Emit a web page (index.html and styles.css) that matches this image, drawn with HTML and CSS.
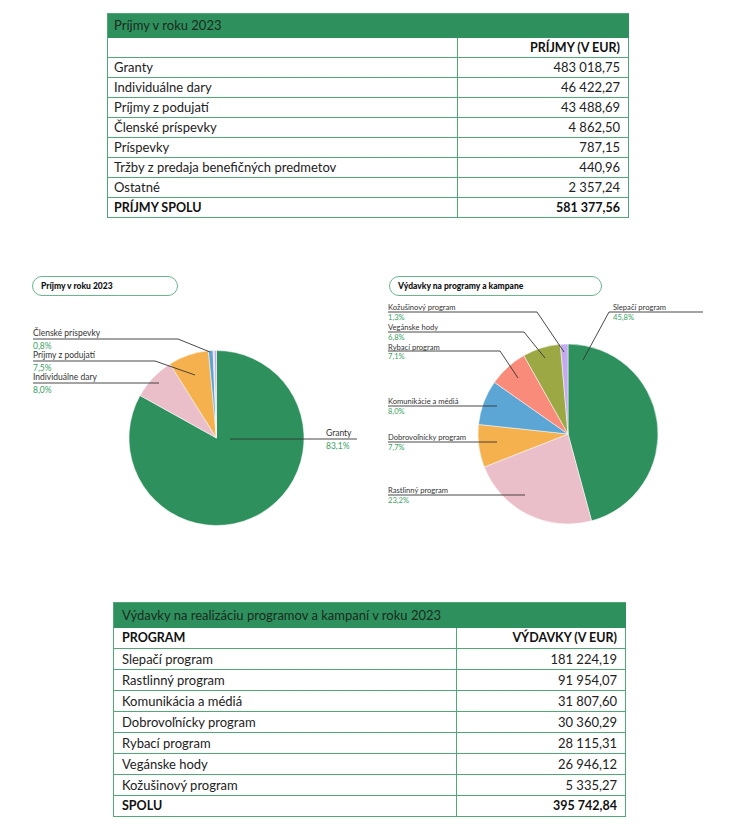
FILE: index.html
```html
<!DOCTYPE html>
<html lang="sk">
<head>
<meta charset="utf-8">
<title>Príjmy a výdavky 2023</title>
<link rel="stylesheet" href="styles.css">
</head>
<body>
<div class="page">
  <table class="fin fin-income">
    <colgroup><col class="c1"><col class="c2"></colgroup>
    <thead>
      <tr><th class="title" colspan="2">Príjmy v roku 2023</th></tr>
      <tr><th class="hd"></th><th class="hd num">PRÍJMY (V EUR)</th></tr>
    </thead>
    <tbody>
      <tr><td>Granty</td><td class="num">483 018,75</td></tr>
      <tr><td>Individuálne dary</td><td class="num">46 422,27</td></tr>
      <tr><td>Príjmy z podujatí</td><td class="num">43 488,69</td></tr>
      <tr><td>Členské príspevky</td><td class="num">4 862,50</td></tr>
      <tr><td>Príspevky</td><td class="num">787,15</td></tr>
      <tr><td>Tržby z predaja benefičných predmetov</td><td class="num">440,96</td></tr>
      <tr><td>Ostatné</td><td class="num">2 357,24</td></tr>
      <tr class="total"><td>PRÍJMY SPOLU</td><td class="num">581 377,56</td></tr>
    </tbody>
  </table>

  <section class="charts">
    <div class="chart chart-left">
      <div class="pill">Príjmy v roku 2023</div>
      <svg class="pie" width="345" height="244" viewBox="20 296 345 244">
        <g class="slices">
          <path fill="#2e915d" d="M216.5,438 L216.5,350.5 A87.5,87.5 0 1 1 140.03,395.46 Z"/>
          <path fill="#ebbfca" d="M216.5,438 L140.03,395.46 A87.5,87.5 0 0 1 169.90,363.94 Z"/>
          <path fill="#f5b14e" d="M216.5,438 L169.90,363.94 A87.5,87.5 0 0 1 208.48,350.87 Z"/>
          <path fill="#5ca6d6" d="M216.5,438 L208.48,350.87 A87.5,87.5 0 0 1 213.10,350.57 Z"/>
          <path fill="#f98b7a" d="M216.5,438 L213.10,350.57 A87.5,87.5 0 0 1 213.83,350.54 Z"/>
          <path fill="#9ca844" d="M216.5,438 L213.83,350.54 A87.5,87.5 0 0 1 214.24,350.53 Z"/>
          <path fill="#c4aaf0" d="M216.5,438 L214.24,350.53 A87.5,87.5 0 0 1 216.5,350.5 Z"/>
        </g>
        <g class="leaders">
          <polyline points="33,339 178,339 210,352"/>
          <polyline points="33,361 155,361 195,375"/>
          <polyline points="33,383 159,383"/>
          <polyline points="230,439 357,439"/>
        </g>
        <g class="labels">
          <text x="33" y="336">Členské príspevky</text>
          <text class="pct" x="33" y="349">0,8%</text>
          <text x="33" y="358">Príjmy z podujatí</text>
          <text class="pct" x="33" y="371">7,5%</text>
          <text x="33" y="380">Individuálne dary</text>
          <text class="pct" x="33" y="393">8,0%</text>
          <text x="326" y="436">Granty</text>
          <text class="pct" x="326" y="449">83,1%</text>
        </g>
      </svg>
    </div>
    <div class="chart chart-right">
      <div class="pill">Výdavky na programy a kampane</div>
      <svg class="pie" width="365" height="244" viewBox="365 296 365 244">
        <g class="slices">
          <path fill="#2e915d" d="M568,434 L568,344 A90,90 0 0 1 591.54,520.87 Z"/>
          <path fill="#ebbfca" d="M568,434 L591.54,520.87 A90,90 0 0 1 484.25,466.97 Z"/>
          <path fill="#f5b14e" d="M568,434 L484.25,466.97 A90,90 0 0 1 478.51,424.41 Z"/>
          <path fill="#5ca6d6" d="M568,434 L478.51,424.41 A90,90 0 0 1 494.33,382.30 Z"/>
          <path fill="#f98b7a" d="M568,434 L494.33,382.30 A90,90 0 0 1 523.85,355.57 Z"/>
          <path fill="#9ca844" d="M568,434 L523.85,355.57 A90,90 0 0 1 560.38,344.32 Z"/>
          <path fill="#c4aaf0" d="M568,434 L560.38,344.32 A90,90 0 0 1 568,344 Z"/>
        </g>
        <g class="leaders">
          <polyline points="388,312 537,312 564,352"/>
          <polyline points="388,332 524,332 545,358"/>
          <polyline points="388,351 500,351 518,378"/>
          <polyline points="703,312 609,312 583,360"/>
          <polyline points="388,406 497,406"/>
          <polyline points="388,442 497,442"/>
          <polyline points="388,495 525,495"/>
        </g>
        <g class="labels small">
          <text x="388" y="310">Kožušinový program</text>
          <text class="pct" x="388" y="320">1,3%</text>
          <text x="388" y="330">Vegánske hody</text>
          <text class="pct" x="388" y="339.5">6,8%</text>
          <text x="388" y="349.5">Rybací program</text>
          <text class="pct" x="388" y="359">7,1%</text>
          <text x="613" y="310">Slepačí program</text>
          <text class="pct" x="613" y="320">45,8%</text>
          <text x="388" y="404">Komunikácie a médiá</text>
          <text class="pct" x="388" y="414">8,0%</text>
          <text x="388" y="440">Dobrovoľnícky program</text>
          <text class="pct" x="388" y="450">7,7%</text>
          <text x="388" y="493">Rastlinný program</text>
          <text class="pct" x="388" y="503">23,2%</text>
        </g>
      </svg>
    </div>
  </section>

  <table class="fin fin-exp">
    <colgroup><col class="c1"><col class="c2"></colgroup>
    <thead>
      <tr><th class="title" colspan="2">Výdavky na realizáciu programov a kampaní v roku 2023</th></tr>
      <tr><th class="hd">PROGRAM</th><th class="hd num">VÝDAVKY (V EUR)</th></tr>
    </thead>
    <tbody>
      <tr><td>Slepačí program</td><td class="num">181 224,19</td></tr>
      <tr><td>Rastlinný program</td><td class="num">91 954,07</td></tr>
      <tr><td>Komunikácia a médiá</td><td class="num">31 807,60</td></tr>
      <tr><td>Dobrovoľnícky program</td><td class="num">30 360,29</td></tr>
      <tr><td>Rybací program</td><td class="num">28 115,31</td></tr>
      <tr><td>Vegánske hody</td><td class="num">26 946,12</td></tr>
      <tr><td>Kožušinový program</td><td class="num">5 335,27</td></tr>
      <tr class="total"><td>SPOLU</td><td class="num">395 742,84</td></tr>
    </tbody>
  </table>
</div>
</body>
</html>
```

FILE: styles.css
```css
html, body {
  margin: 0;
  padding: 0;
  background: #ffffff;
}

body {
  font-family: Lato, "Open Sans", "Liberation Sans", sans-serif;
  color: #222222;
}

.page {
  width: 730px;
  padding-top: 13px;
}

/* ---------- tables ---------- */
.fin {
  border-collapse: separate;
  border-spacing: 0;
  table-layout: fixed;
  border-top: 1px solid #4fa875;
  border-left: 1px solid #4fa875;
  font-size: 13px;
}

.fin th,
.fin td {
  padding: 0 8px 0 6px;
  border-right: 1px solid #4fa875;
  border-bottom: 1px solid #4fa875;
  text-align: left;
  white-space: nowrap;
  font-weight: 400;
  vertical-align: middle;
}

.fin .num {
  text-align: right;
}

.fin .title {
  background: #2e915d;
  border-color: #2e915d;
  color: #1b2a20;
  line-height: 23px;
}

.fin .hd,
.fin .total td {
  font-weight: 700;
  font-size: 12.5px;
  color: #111111;
}

.fin-income {
  margin-left: 107px;
  width: 521px;
}

.fin-income .c1 { width: 350px; }
.fin-income .c2 { width: 171px; }

.fin-income td,
.fin-income .hd {
  line-height: 19px;
}

.fin-exp {
  margin-top: 62px;
  margin-left: 113px;
  width: 512px;
}

.fin-exp .c1 { width: 343px; }
.fin-exp .c2 { width: 169px; }

.fin-exp th,
.fin-exp td {
  padding-left: 8px;
}

.fin-exp .title {
  line-height: 24px;
}

.fin-exp td,
.fin-exp .hd {
  line-height: 20px;
}

/* ---------- charts ---------- */
.charts {
  display: flex;
  margin-top: 58px;
}

.chart {
  display: flex;
  flex-direction: column;
}

.chart-left {
  margin-left: 20px;
  width: 345px;
}

.chart-right {
  width: 365px;
}

.pill {
  box-sizing: border-box;
  height: 20px;
  border: 1px solid #6ab58c;
  border-radius: 10px;
  font-size: 8.5px;
  font-weight: 900;
  line-height: 18px;
  padding-left: 8px;
  color: #111111;
}

.chart-left .pill {
  margin-left: 12px;
  width: 146px;
}

.chart-right .pill {
  margin-left: 24px;
  width: 213px;
}

.pie {
  display: block;
}

.slices path {
  stroke: #ffffff;
  stroke-width: 0.5;
}

.leaders polyline {
  fill: none;
  stroke: #333333;
  stroke-width: 0.9;
}

.labels text {
  font-family: Lato, "Open Sans", "Liberation Sans", sans-serif;
  font-size: 8.5px;
  fill: #333333;
}

.labels.small text {
  font-size: 7.6px;
}

.labels text.pct {
  fill: #3a9f63;
}
```
